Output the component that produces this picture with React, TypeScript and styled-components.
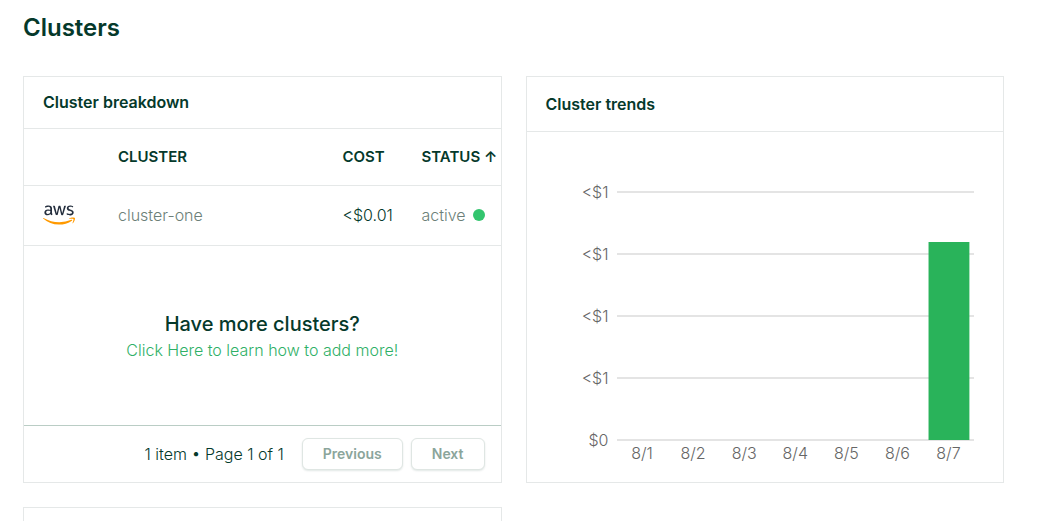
import React from "react";
import styled, { createGlobalStyle } from "styled-components";
import { FaAws } from "react-icons/fa";

const ink = "#05392b";
const muted = "#6c7f78";
const line = "#e5e8e8";

const GlobalStyle = createGlobalStyle`
  *, *::before, *::after { box-sizing: border-box; }
  body {
    margin: 0;
    background: #fff;
    color: ${ink};
    font-family: Inter, "Open Sans", sans-serif;
    font-size: 16px;
    line-height: 24px;
    overflow-x: hidden;
  }
  h1, h2, h3, p, ul { margin: 0; padding: 0; }
`;

const Page = styled.main`
  padding: 12px 41px 0 23px;
  height: 100vh;
  overflow: hidden;
`;

const Title = styled.h1`
  font-size: 24px;
  font-weight: 600;
  line-height: 32px;
  margin-bottom: 32px;
`;

const CardGrid = styled.div`
  display: grid;
  grid-template-columns: 1fr 1fr;
  gap: 24px;
`;

const Card = styled.section`
  display: flex;
  flex-direction: column;
  min-width: 0;
  min-height: 60px;
  border: 1px solid ${line};
`;

const CardHeader = styled.header<{ $tall?: boolean }>`
  padding: ${(p) => (p.$tall ? "15px 19px" : "13px 19px 14px")};
  border-bottom: 1px solid ${line};
`;

const CardTitle = styled.h2`
  font-size: 16px;
  font-weight: 600;
  line-height: 24px;
`;

const Table = styled.table`
  width: 100%;
  table-layout: fixed;
  border-collapse: separate;
  border-spacing: 0;
  text-align: left;
`;

const HeadCell = styled.th<{ $width?: number }>`
  width: ${(p) => (p.$width ? `${p.$width}px` : "auto")};
  height: 57px;
  padding: 0;
  border-bottom: 1px solid ${line};
  font-size: 15px;
  font-weight: 600;
  white-space: nowrap;
`;

const Cell = styled.td<{ $muted?: boolean }>`
  height: 60px;
  padding: 0 0 2px;
  border-bottom: 1px solid ${line};
  color: ${(p) => (p.$muted ? muted : ink)};
  font-weight: 300;
  white-space: nowrap;
`;

const LogoCell = styled(Cell)`
  padding-left: 19px;
`;

const AwsLogo = styled(FaAws)`
  display: block;
  width: 32px;
  height: 26px;
  fill: url(#aws-colors);
`;

const Defs = styled.svg`
  display: block;
  width: 0;
  height: 0;
`;

const Status = styled.span`
  display: flex;
  align-items: center;
  gap: 7px;
`;

const Dot = styled.i`
  width: 12px;
  height: 12px;
  border-radius: 50%;
  background: #33c56e;
`;

const SortButton = styled.button`
  padding: 0;
  border: 0;
  background: none;
  color: inherit;
  font: inherit;
`;

const Invite = styled.div`
  display: flex;
  flex: 1;
  flex-direction: column;
  align-items: center;
  justify-content: center;
  min-height: 179px;
`;

const InviteTitle = styled.h3`
  font-size: 20px;
  font-weight: 500;
  line-height: 28px;
`;

const InviteLink = styled.a`
  color: #2fb067;
  font-weight: 300;
  text-decoration: none;
`;

const Pager = styled.footer`
  display: flex;
  align-items: center;
  justify-content: flex-end;
  gap: 8px;
  padding: 12px 16px;
  border-top: 1px solid #bacdc5;
`;

const PagerInfo = styled.p`
  margin-right: 10px;
  font-weight: 300;
`;

const PagerButton = styled.button`
  height: 32px;
  padding: 0 20px;
  border: 1px solid #dfe6e3;
  border-radius: 6px;
  background: #fff;
  box-shadow: 0 1px 2px rgba(5, 57, 43, 0.12);
  color: #8ba59b;
  font-family: inherit;
  font-size: 14px;
  font-weight: 600;
  line-height: 20px;
`;

const Chart = styled.div`
  display: flex;
  gap: 8px;
  padding: 29px 29px 11px 19px;
  color: #666;
  font-weight: 300;
`;

const YAxis = styled.ul`
  flex: 0 0 63px;
  list-style: none;
  text-align: right;
`;

const YLabel = styled.li`
  line-height: 62px;
`;

const PlotColumn = styled.div`
  flex: 1;
  min-width: 0;
  padding-top: 30px;
`;

const Plot = styled.svg`
  display: block;
  width: 100%;
  height: 250px;
`;

const XAxis = styled.ul`
  display: grid;
  grid-template-columns: repeat(7, 1fr);
  list-style: none;
  text-align: center;
`;

const days = ["8/1", "8/2", "8/3", "8/4", "8/5", "8/6", "8/7"];
const costs = [0, 0, 0, 0, 0, 0, 198];
const ticks = ["<$1", "<$1", "<$1", "<$1", "$0"];
const rowHeight = 62;
const baseline = 249;

function TrendChart() {
  const step = 100 / days.length;
  const barWidth = step * 0.8;
  return (
    <Chart>
      <YAxis>
        {ticks.map((t, i) => (
          <YLabel key={i}>{t}</YLabel>
        ))}
      </YAxis>
      <PlotColumn>
        <Plot role="img" aria-label="Cluster cost by day">
          {ticks.map((_, i) => (
            <rect key={i} x="0" y={i * rowHeight} width="100%" height="2" fill="#e4e4e4" />
          ))}
          {costs.map((c, i) =>
            c > 0 ? (
              <rect
                key={i}
                x={`${step * i + (step - barWidth) / 2}%`}
                y={baseline - c}
                width={`${barWidth}%`}
                height={c}
                fill="#29b35a"
              />
            ) : null
          )}
        </Plot>
        <XAxis>
          {days.map((d) => (
            <li key={d}>{d}</li>
          ))}
        </XAxis>
      </PlotColumn>
    </Chart>
  );
}

export default function App() {
  return (
    <Page>
      <GlobalStyle />
      <Defs aria-hidden="true">
        <linearGradient id="aws-colors" x1="0" y1="0" x2="0" y2="1">
          <stop offset="0.62" stopColor="#252f3e" />
          <stop offset="0.62" stopColor="#ff9900" />
        </linearGradient>
      </Defs>
      <Title>Clusters</Title>
      <CardGrid>
        <Card>
          <CardHeader>
            <CardTitle>Cluster breakdown</CardTitle>
          </CardHeader>
          <Table>
            <thead>
              <tr>
                <HeadCell $width={94} aria-label="Provider" />
                <HeadCell>CLUSTER</HeadCell>
                <HeadCell $width={79}>COST</HeadCell>
                <HeadCell $width={79} aria-sort="ascending">
                  <SortButton type="button">STATUS ↑</SortButton>
                </HeadCell>
              </tr>
            </thead>
            <tbody>
              <tr>
                <LogoCell>
                  <AwsLogo aria-label="AWS" />
                </LogoCell>
                <Cell $muted>cluster-one</Cell>
                <Cell>&lt;$0.01</Cell>
                <Cell $muted>
                  <Status>
                    active
                    <Dot />
                  </Status>
                </Cell>
              </tr>
            </tbody>
          </Table>
          <Invite>
            <InviteTitle>Have more clusters?</InviteTitle>
            <InviteLink href="#add-clusters">Click Here to learn how to add more!</InviteLink>
          </Invite>
          <Pager>
            <PagerInfo>1 item • Page 1 of 1</PagerInfo>
            <PagerButton type="button">Previous</PagerButton>
            <PagerButton type="button">Next</PagerButton>
          </Pager>
        </Card>
        <Card>
          <CardHeader $tall>
            <CardTitle>Cluster trends</CardTitle>
          </CardHeader>
          <TrendChart />
        </Card>
        <Card />
      </CardGrid>
    </Page>
  );
}
